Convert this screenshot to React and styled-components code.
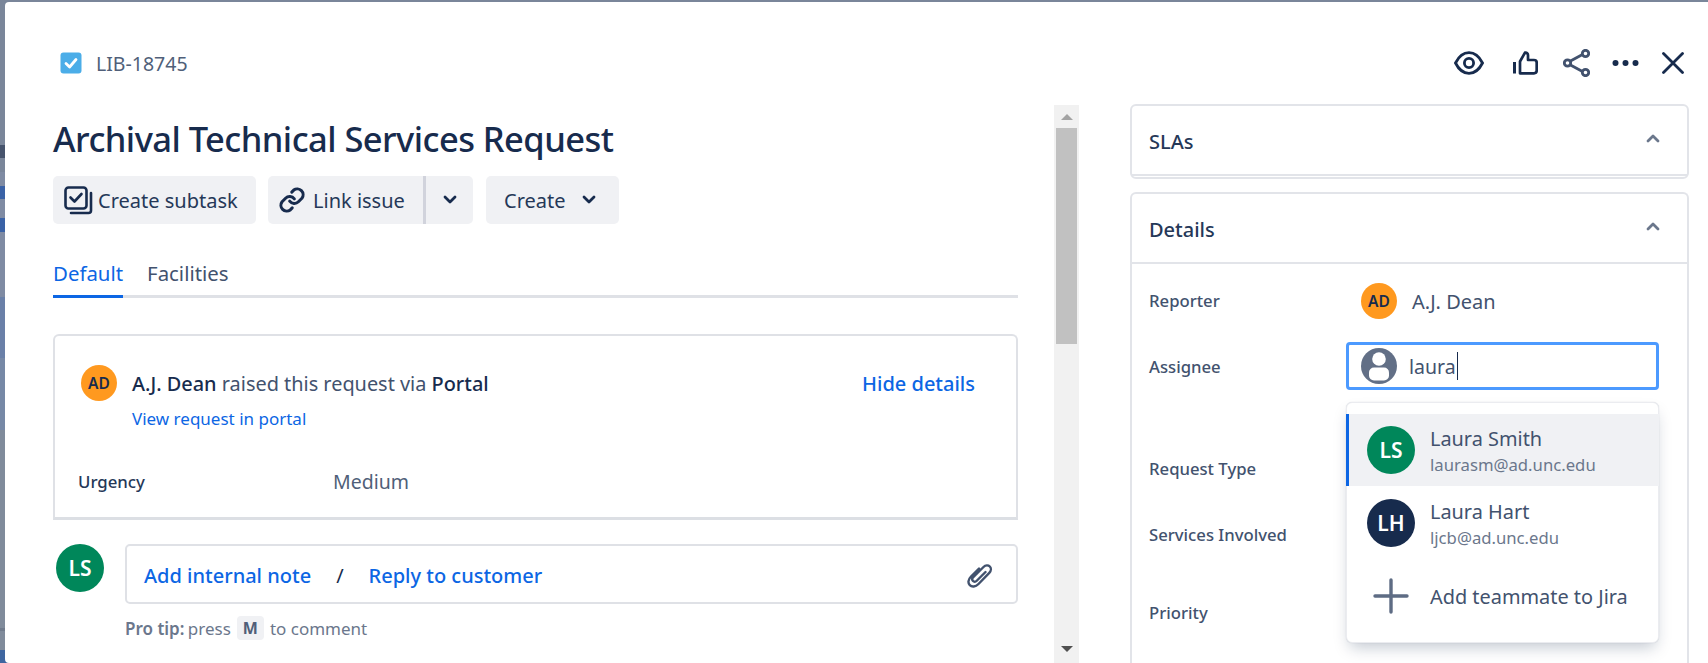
import React from "react";
import styled, { createGlobalStyle } from "styled-components";

const Global = createGlobalStyle`
  html, body { margin: 0; padding: 0; height: 100%; overflow: hidden; background: #7f8a9c; }
  #root { height: 100%; }
  * { box-sizing: border-box; }
  body { font-family: "Noto Sans", "Open Sans", sans-serif; color: #172b4d; }
`;

const Backdrop = styled.div`
  position: relative;
  height: 663px;
  width: 1708px;
  padding: 2px 0 0 5px;
  background: linear-gradient(
    180deg,
    #7a869a 0 145px,
    #46536c 145px 158px,
    #7a869a 158px 172px,
    #7f8ba3 172px 186px,
    #3a62a6 186px 199px,
    #7f8ba3 199px 218px,
    #3a62a6 218px 232px,
    #7f8ba3 232px 297px,
    #6a80a8 297px 358px,
    #7688a6 358px 430px,
    #808b9b 430px 628px,
    #707b8c 628px 631px,
    #808b9b 631px 650px,
    #3f66a0 650px 663px
  );
  overflow: hidden;
`;
const Modal = styled.div`
  height: 661px;
  background: #fff;
  border-radius: 4px 0 0 4px;
  display: flex;
  flex-direction: column;
`;
const Header = styled.header`
  height: 102px;
  flex: none;
  display: flex;
  justify-content: space-between;
  padding: 47px 24px 0 55px;
`;
const IssueKey = styled.div`
  display: flex;
  align-items: center;
  height: 28px;
  gap: 14px;
  font-size: 19.5px;
  color: #505f79;
`;
const HeaderIcons = styled.div`
  display: flex;
  align-items: center;
  height: 28px;
`;
const IconSlot = styled.span`
  display: flex;
  width: ${(p) => p.$w}px;
  justify-content: flex-start;
`;
const Body = styled.div`
  flex: 1;
  display: flex;
  min-height: 0;
  overflow: hidden;
`;
const Main = styled.main`
  flex: none;
  width: 965px;
  margin-left: 48px;
  padding-top: 11px;
`;
const Title = styled.h1`
  margin: 0;
  font-size: 34.5px;
  letter-spacing: -0.55px;
  line-height: 48px;
  font-weight: 500;
  color: #172b4d;
  white-space: nowrap;
`;
const Actions = styled.div`
  display: flex;
  margin-top: 13px;
  gap: 12px;
`;
const Button = styled.div`
  height: 48px;
  width: ${(p) => p.$w}px;
  display: flex;
  align-items: center;
  background: #f0f1f4;
  border-radius: 5px;
  font-size: 20px;
  color: #253858;
  padding-left: ${(p) => p.$pl}px;
  gap: ${(p) => p.$gap || 0}px;
  white-space: nowrap;
  flex: none;
`;
const SplitButton = styled.div`
  display: flex;
  height: 48px;
  width: 205px;
  margin-right: 1px;
  background: #f0f1f4;
  border-radius: 5px;
  font-size: 20px;
  color: #253858;
  flex: none;
`;
const SplitMain = styled.div`
  width: 158px;
  display: flex;
  align-items: center;
  gap: 7px;
  padding-left: 10px;
  border-right: 3px solid #d1d3dc;
  white-space: nowrap;
`;
const SplitCaret = styled.div`
  flex: 1;
  display: flex;
  align-items: center;
  justify-content: center;
`;
const Tabs = styled.nav`
  display: flex;
  margin-top: 30px;
  height: 44px;
  border-bottom: 3px solid #dfe1e6;
  font-size: 20.4px;
  gap: 24px;
`;
const Tab = styled.div`
  height: 44px;
  line-height: 38px;
  color: ${(p) => (p.$active ? "#0c66e4" : "#42526e")};
  border-bottom: 3px solid ${(p) => (p.$active ? "#0c66e4" : "transparent")};
`;
const Card = styled.section`
  margin-top: 36px;
  height: 186px;
  border: 2px solid #dfe1e6;
  border-bottom: 3px solid #dcdfe4;
  border-radius: 6px 6px 0 0;
  padding: 29px 41px 0 26px;
`;
const CardTop = styled.div`
  display: flex;
  gap: 15px;
`;
const Avatar = styled.div`
  width: ${(p) => p.$size}px;
  height: ${(p) => p.$size}px;
  flex: none;
  border-radius: 50%;
  background: ${(p) => p.$bg};
  color: ${(p) => p.$fg};
  display: flex;
  align-items: center;
  justify-content: center;
  font-weight: 600;
  font-size: ${(p) => p.$font}px;
`;
const CardText = styled.div`
  flex: 1;
  padding-top: 6px;
`;
const Raised = styled.div`
  font-size: 19.9px;
  line-height: 26px;
  color: #42526e;
  white-space: nowrap;
  b { font-weight: 500; color: #172b4d; }
`;
const PortalLink = styled.div`
  font-size: 17px;
  line-height: 24px;
  margin-top: 10px;
  color: #0c66e4;
`;
const HideLink = styled.div`
  font-size: 20px;
  line-height: 26px;
  font-weight: 500;
  color: #0c66e4;
  padding-top: 6px;
`;
const CardField = styled.div`
  display: flex;
  align-items: center;
  margin-top: 37px;
  margin-left: -3px;
`;
const FieldKey = styled.div`
  width: 255px;
  font-size: 16.8px;
  font-weight: 500;
  color: #253858;
`;
const FieldValue = styled.div`
  font-size: 19.5px;
  color: #505f79;
`;
const CommentRow = styled.div`
  display: flex;
  margin-top: 24px;
  padding-left: 3px;
  gap: 21px;
  align-items: flex-start;
`;
const CommentCol = styled.div`
  flex: 1;
`;
const CommentBox = styled.div`
  height: 60px;
  border: 2px solid #dfe1e6;
  border-radius: 5px;
  display: flex;
  align-items: center;
  padding: 3px 23px 0 17px;
  font-size: 20px;
  font-weight: 500;
  color: #0c66e4;
`;
const Slash = styled.span`
  font-weight: 400;
  color: #172b4d;
  margin: 0 25px;
`;
const Clip = styled.span`
  margin-left: auto;
  display: flex;
`;
const ProTip = styled.div`
  display: flex;
  align-items: center;
  height: 24px;
  margin-top: 12px;
  font-size: 17px;
  color: #6b778c;
  gap: 6px;
  white-space: nowrap;
  b { font-weight: 600; margin-right: -1px; }
`;
const Kbd = styled.span`
  width: 27px;
  height: 24px;
  background: #f0f1f4;
  border-radius: 4px;
  display: flex;
  align-items: center;
  justify-content: center;
  font-weight: 700;
  font-size: 16px;
  color: #505f79;
`;
const Scrollbar = styled.div`
  flex: none;
  width: 25px;
  margin-left: 36px;
  margin-top: 1px;
  background: #f1f1f1;
  display: flex;
  flex-direction: column;
  align-items: center;
`;
const ArrowUp = styled.span`
  margin-top: 9px;
  width: 0;
  height: 0;
  border: 6px solid transparent;
  border-top: 0;
  border-bottom: 6px solid #a3a3a3;
`;
const Thumb = styled.div`
  margin-top: 8px;
  width: 21px;
  height: 216px;
  background: #c1c1c1;
`;
const ArrowDown = styled.span`
  margin-top: auto;
  margin-bottom: 11px;
  width: 0;
  height: 0;
  border: 6px solid transparent;
  border-bottom: 0;
  border-top: 6px solid #505050;
`;
const Side = styled.aside`
  flex: none;
  width: 559px;
  margin-left: 51px;
`;
const Panel = styled.section`
  border: 2px solid #e2e4e9;
  border-radius: 6px;
  margin-bottom: 13px;
`;
const OpenPanel = styled(Panel)`
  border-radius: 6px 6px 0 0;
  border-bottom: 0;
  height: 480px;
`;
const PanelHead = styled.div`
  height: 70px;
  display: flex;
  align-items: center;
  justify-content: space-between;
  padding: 2px 27px 0 17px;
  font-size: 20px;
  font-weight: 500;
  color: #253858;
  border-bottom: 2px solid #e2e4e9;
`;
const PanelFoot = styled.div`
  height: 1px;
`;
const PanelChevron = styled.span`
  display: flex;
  margin-top: -7px;
`;
const FieldRow = styled.div`
  display: flex;
  align-items: center;
  height: ${(p) => p.$h}px;
  margin-top: ${(p) => p.$mt || 0}px;
  padding-left: 17px;
`;
const FieldLabel = styled.div`
  width: 197px;
  flex: none;
  font-size: 16.7px;
  font-weight: 500;
  color: #42526e;
  white-space: nowrap;
  padding-bottom: ${(p) => (p.$raised ? 2 : 0)}px;
`;
const Person = styled.div`
  display: flex;
  align-items: center;
  gap: 15px;
  padding-left: 15px;
  font-size: 20px;
  color: #42526e;
`;
const Assign = styled.div`
  position: relative;
  flex: none;
  width: 313px;
`;
const Input = styled.div`
  height: 48px;
  border: 3px solid #4c9aff;
  border-radius: 4px;
  display: flex;
  align-items: center;
  gap: 12px;
  padding-left: 12px;
  font-size: 19.5px;
  color: #42526e;
`;
const Caret = styled.span`
  display: inline-block;
  width: 1px;
  height: 28px;
  background: #172b4d;
  margin-left: -11px;
`;
const Menu = styled.div`
  position: absolute;
  z-index: 2;
  top: 60px;
  left: 0;
  width: 313px;
  height: 241px;
  background: #fff;
  border-radius: 6px;
  border: 1px solid #ebecf0;
  box-shadow: 0 8px 16px -4px rgba(9, 30, 66, 0.25), 0 0 1px rgba(9, 30, 66, 0.2);
  padding-top: 11px;
`;
const Option = styled.div`
  height: ${(p) => p.$h}px;
  display: flex;
  align-items: center;
  gap: 15px;
  padding-left: 18px;
  margin-left: -1px;
  margin-right: -1px;
  background: ${(p) => (p.$active ? "#f0f1f4" : "transparent")};
  border-left: 3px solid ${(p) => (p.$active ? "#0c66e4" : "transparent")};
`;
const OptionText = styled.div`
  display: flex;
  flex-direction: column;
  padding-top: 1px;
`;
const OptionName = styled.div`
  font-size: 19.9px;
  line-height: 27px;
  color: #42526e;
  white-space: nowrap;
`;
const OptionMail = styled.div`
  font-size: 16.7px;
  line-height: 25px;
  color: #6b778c;
`;
const PlusSlot = styled.div`
  width: 48px;
  display: flex;
  justify-content: center;
  flex: none;
`;

const Chevron = ({ up, color = "#172b4d" }) => (
  <svg width="14" height="10" viewBox="0 0 14 10" fill="none">
    <path d={up ? "M2 8l5-5 5 5" : "M2 2l5 5 5-5"} stroke={color} strokeWidth="2.8" strokeLinecap="round" strokeLinejoin="round" />
  </svg>
);

const CheckIcon = () => (
  <svg width="22" height="22" viewBox="0 0 22 22">
    <rect x="0.5" y="0.5" width="21" height="21" rx="3" fill="#4bade8" />
    <path d="M6 11.5l3.6 3.5L16 7.500" fill="none" stroke="#fff" strokeWidth="2.8" strokeLinecap="round" strokeLinejoin="round" />
  </svg>
);

const App = () => (
  <>
    <Global />
    <Backdrop>
      <Modal>
        <Header>
          <IssueKey>
            <CheckIcon />
            LIB-18745
          </IssueKey>
          <HeaderIcons>
            <IconSlot $w={59}>
              <svg width="30" height="24" viewBox="0 0 30 24" fill="none">
                <path d="M1.500 12C5 5 9.500 1.700 15 1.700S25 5 28.500 12C25 19 20.500 22.300 15 22.300S5 19 1.500 12z" stroke="#172b4d" strokeWidth="2.800" />
                <circle cx="15" cy="12" r="4.600" stroke="#172b4d" strokeWidth="2.800" />
              </svg>
            </IconSlot>
            <IconSlot $w={50}>
              <svg width="25" height="24" viewBox="0 0 25 24" fill="none">
                <path d="M7 10.500l5-8.900c1.800-.4 3 1 3 2.600V9h6c1.600 0 2.700 1.200 2.700 2.700v7.800c0 1.500-1.100 2.800-2.700 2.800H7z" stroke="#172b4d" strokeWidth="2.700" strokeLinejoin="round" />
                <path d="M1.500 11v11.500" stroke="#172b4d" strokeWidth="3" />
              </svg>
            </IconSlot>
            <IconSlot $w={49}>
              <svg width="27" height="28" viewBox="0 0 27 28" fill="none">
                <path d="M7 12.200L19.500 5.500M7 15.800L19.500 22.500" stroke="#42526e" strokeWidth="2.800" />
                <circle cx="4.500" cy="14" r="3.200" stroke="#42526e" strokeWidth="2.800" />
                <circle cx="22.500" cy="4.500" r="3.200" stroke="#42526e" strokeWidth="2.800" />
                <circle cx="22.500" cy="23.500" r="3.200" stroke="#42526e" strokeWidth="2.800" />
              </svg>
            </IconSlot>
            <IconSlot $w={50}>
              <svg width="27" height="8" viewBox="0 0 27 8">
                <circle cx="3.500" cy="4" r="3" fill="#172b4d" />
                <circle cx="13.500" cy="4" r="3" fill="#172b4d" />
                <circle cx="23.500" cy="4" r="3" fill="#172b4d" />
              </svg>
            </IconSlot>
            <IconSlot $w={22}>
              <svg width="22" height="22" viewBox="0 0 22 22" fill="none">
                <path d="M1.500 1.500l19 19M20.500 1.500l-19 19" stroke="#172b4d" strokeWidth="2.800" strokeLinecap="round" />
              </svg>
            </IconSlot>
          </HeaderIcons>
        </Header>
        <Body>
          <Main>
            <Title>Archival Technical Services Request</Title>
            <Actions>
              <Button $w={203} $pl={11} $gap={5}>
                <svg width="29" height="29" viewBox="0 0 29 29" fill="none">
                  <rect x="1.500" y="1.500" width="21" height="21" rx="3" stroke="#172b4d" strokeWidth="2.600" />
                  <path d="M6.500 11.500l4 4 7-7.500" stroke="#172b4d" strokeWidth="2.600" strokeLinecap="round" strokeLinejoin="round" />
                  <path d="M27 7v17.500c0 1.500-1 2.500-2.500 2.500H7" stroke="#172b4d" strokeWidth="2.600" strokeLinecap="round" />
                </svg>
                Create subtask
              </Button>
              <SplitButton>
                <SplitMain>
                  <svg width="28" height="28" viewBox="0 0 24 24" fill="none" stroke="#172b4d" strokeWidth="2.600" strokeLinecap="round" strokeLinejoin="round">
                    <path d="M10 13a5 5 0 0 0 7.500.5l3-3a5 5 0 0 0-7-7l-1.700 1.700" />
                    <path d="M14 11a5 5 0 0 0-7.500-.5l-3 3a5 5 0 0 0 7 7l1.700-1.700" />
                  </svg>
                  Link issue
                </SplitMain>
                <SplitCaret><Chevron /></SplitCaret>
              </SplitButton>
              <Button $w={133} $pl={18} $gap={16}>
                Create
                <Chevron />
              </Button>
            </Actions>
            <Tabs>
              <Tab $active>Default</Tab>
              <Tab>Facilities</Tab>
            </Tabs>
            <Card>
              <CardTop>
                <Avatar $size={36} $bg="#ff991f" $fg="#172b4d" $font={15.5}>AD</Avatar>
                <CardText>
                  <Raised><b>A.J. Dean</b> raised this request via <b>Portal</b></Raised>
                  <PortalLink>View request in portal</PortalLink>
                </CardText>
                <HideLink>Hide details</HideLink>
              </CardTop>
              <CardField>
                <FieldKey>Urgency</FieldKey>
                <FieldValue>Medium</FieldValue>
              </CardField>
            </Card>
            <CommentRow>
              <Avatar $size={48} $bg="#00875a" $fg="#fff" $font={21}>LS</Avatar>
              <CommentCol>
                <CommentBox>
                  Add internal note
                  <Slash>/</Slash>
                  Reply to customer
                  <Clip>
                    <svg width="26" height="26" viewBox="0 0 26 26" fill="none">
                      <path d="M18.500 9L9.500 18c-1 1-2.600 1-3.500 0s-1-2.500 0-3.500L16.500 4c2-2 4.800-2 6.300-.5s1.500 4.300-.5 6.300L11.500 21c-3 3-6.700 3.200-8.700 1.200s-1.800-5.700 1.200-8.700L12 5.500" stroke="#42526e" strokeWidth="2.400" strokeLinecap="round" />
                    </svg>
                  </Clip>
                </CommentBox>
                <ProTip><span><b>Pro tip:</b> press</span><Kbd>M</Kbd><span>to comment</span></ProTip>
              </CommentCol>
            </CommentRow>
          </Main>
          <Scrollbar>
            <ArrowUp />
            <Thumb />
            <ArrowDown />
          </Scrollbar>
          <Side>
            <Panel>
              <PanelHead>
                SLAs
                <PanelChevron><Chevron up color="#6b778c" /></PanelChevron>
              </PanelHead>
              <PanelFoot />
            </Panel>
            <OpenPanel>
              <PanelHead>
                Details
                <PanelChevron><Chevron up color="#6b778c" /></PanelChevron>
              </PanelHead>
              <FieldRow $h={74}>
                <FieldLabel $raised>Reporter</FieldLabel>
                <Person>
                  <Avatar $size={36} $bg="#ff991f" $fg="#172b4d" $font={15.5}>AD</Avatar>
                  A.J. Dean
                </Person>
              </FieldRow>
              <FieldRow $h={56}>
                <FieldLabel>Assignee</FieldLabel>
                <Assign>
                  <Input>
                    <svg width="36" height="36" viewBox="0 0 36 36">
                      <circle cx="18" cy="18" r="18" fill="#626f86" />
                      <circle cx="18" cy="11" r="6.800" fill="#fff" />
                      <rect x="8" y="19.500" width="20" height="13" rx="5" fill="#fff" />
                    </svg>
                    laura
                    <Caret />
                  </Input>
                  <Menu>
                    <Option $h={72} $active>
                      <Avatar $size={48} $bg="#00875a" $fg="#fff" $font={21}>LS</Avatar>
                      <OptionText>
                        <OptionName>Laura Smith</OptionName>
                        <OptionMail>laurasm@ad.unc.edu</OptionMail>
                      </OptionText>
                    </Option>
                    <Option $h={74}>
                      <Avatar $size={48} $bg="#172b4d" $fg="#fff" $font={21}>LH</Avatar>
                      <OptionText>
                        <OptionName>Laura Hart</OptionName>
                        <OptionMail>ljcb@ad.unc.edu</OptionMail>
                      </OptionText>
                    </Option>
                    <Option $h={72}>
                      <PlusSlot>
                        <svg width="36" height="36" viewBox="0 0 36 36">
                          <path d="M18 2v32M2 18h32" stroke="#5e6c84" strokeWidth="3.400" strokeLinecap="round" />
                        </svg>
                      </PlusSlot>
                      <OptionName>Add teammate to Jira</OptionName>
                    </Option>
                  </Menu>
                </Assign>
              </FieldRow>
              <FieldRow $h={52} $mt={48}>
                <FieldLabel>Request Type</FieldLabel>
              </FieldRow>
              <FieldRow $h={80}>
                <FieldLabel>Services Involved</FieldLabel>
              </FieldRow>
              <FieldRow $h={76}>
                <FieldLabel>Priority</FieldLabel>
              </FieldRow>
            </OpenPanel>
          </Side>
        </Body>
      </Modal>
    </Backdrop>
  </>
);

export default App;
